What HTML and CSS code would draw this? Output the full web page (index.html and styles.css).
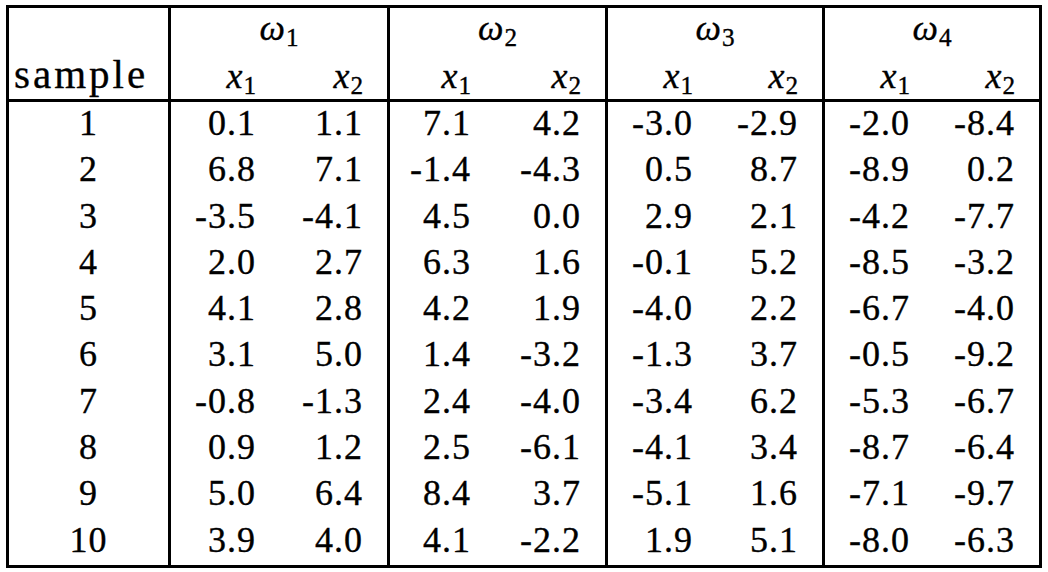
FILE: index.html
```html
<!DOCTYPE html>
<html lang="en">
<head>
    <meta charset="UTF-8">
    <meta name="viewport" content="width=device-width, initial-scale=1.0">
    <title>Training samples</title>
    <link rel="stylesheet" href="styles.css">
</head>
<body>
    <div class="data-table">
        <!-- header row 1 -->
        <div class="cell side"></div>
        <div class="cell group end"><i>ω</i><span class="sub">1</span></div>
        <div class="cell group end"><i>ω</i><span class="sub">2</span></div>
        <div class="cell group end"><i>ω</i><span class="sub">3</span></div>
        <div class="cell group"><i>ω</i><span class="sub">4</span></div>

        <!-- header row 2 -->
        <div class="cell side head label">sample</div>
        <div class="cell num head"><i>x</i><span class="sub">1</span></div>
        <div class="cell num head end"><i>x</i><span class="sub">2</span></div>
        <div class="cell num head"><i>x</i><span class="sub">1</span></div>
        <div class="cell num head end"><i>x</i><span class="sub">2</span></div>
        <div class="cell num head"><i>x</i><span class="sub">1</span></div>
        <div class="cell num head end"><i>x</i><span class="sub">2</span></div>
        <div class="cell num head"><i>x</i><span class="sub">1</span></div>
        <div class="cell num head"><i>x</i><span class="sub">2</span></div>
    </div>

    <script>
        const rows = [
            [0.1, 1.1, 7.1, 4.2, -3.0, -2.9, -2.0, -8.4],
            [6.8, 7.1, -1.4, -4.3, 0.5, 8.7, -8.9, 0.2],
            [-3.5, -4.1, 4.5, 0.0, 2.9, 2.1, -4.2, -7.7],
            [2.0, 2.7, 6.3, 1.6, -0.1, 5.2, -8.5, -3.2],
            [4.1, 2.8, 4.2, 1.9, -4.0, 2.2, -6.7, -4.0],
            [3.1, 5.0, 1.4, -3.2, -1.3, 3.7, -0.5, -9.2],
            [-0.8, -1.3, 2.4, -4.0, -3.4, 6.2, -5.3, -6.7],
            [0.9, 1.2, 2.5, -6.1, -4.1, 3.4, -8.7, -6.4],
            [5.0, 6.4, 8.4, 3.7, -5.1, 1.6, -7.1, -9.7],
            [3.9, 4.0, 4.1, -2.2, 1.9, 5.1, -8.0, -6.3]
        ];

        const table = document.querySelector('.data-table');

        rows.forEach((values, i) => {
            const side = document.createElement('div');
            side.className = 'cell side';
            side.textContent = i + 1;
            table.appendChild(side);

            values.forEach((v, j) => {
                const cell = document.createElement('div');
                cell.className = 'cell num';
                // second column of each of the first three groups gets a rule
                if (j % 2 === 1 && j < 7) cell.classList.add('end');
                cell.textContent = v.toFixed(1);
                table.appendChild(cell);
            });
        });
    </script>
</body>
</html>
```

FILE: styles.css
```css
body, html {
    margin: 0;
    padding: 0;
    background-color: #fff;
    overflow: hidden;
}

body {
    padding: 5px 0 0 6px;
    font-family: "Liberation Serif", "DejaVu Serif", serif;
    color: #000;
}

.data-table {
    display: grid;
    grid-template-columns: 162px 109px 110px 105px 113px 109px 108px 109px 105px;
    grid-template-rows: 45px 49px repeat(10, 46.3px);
    width: 1030px;
    border: 3px solid #000;
}

.cell {
    box-sizing: border-box;
    font-size: 36px;
    line-height: 42px;
    white-space: nowrap;
    letter-spacing: 1px;
    -webkit-text-stroke: 0.35px #000;
}

.side {
    text-align: center;
    border-right: 3px solid #000;
}

.group {
    grid-column: span 2;
    text-align: center;
    line-height: 40px;
}

.num {
    text-align: right;
    padding-right: 24px;
}

.end {
    border-right: 3px solid #000;
}

.head {
    border-bottom: 3px solid #000;
    line-height: 46px;
}

.label {
    text-align: left;
    padding-left: 5px;
    font-size: 41px;
    line-height: 42px;
    letter-spacing: 3px;
}

.sub {
    font-size: 0.7em;
    line-height: 0;
    vertical-align: -0.22em;
    letter-spacing: 0;
}
```
